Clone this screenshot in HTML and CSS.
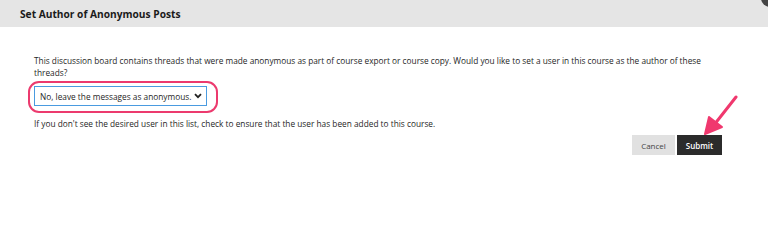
FILE: index.html
```html
<!DOCTYPE html>
<html lang="en">

<head>
    <meta charset="UTF-8">
    <meta name="viewport" content="width=device-width, initial-scale=1.0">
    <title>Set Author of Anonymous Posts</title>
    <link rel="stylesheet" href="styles.css">
</head>

<body>
    <div class="dialog">
        <div class="dialog-header">
            <h1>Set Author of Anonymous Posts</h1>
            <span class="close-button"></span>
        </div>
        <div class="dialog-body">
            <p class="intro">This discussion board contains threads that were made anonymous as part of course export or course copy. Would you like to set a user in this course as the author of these threads?</p>
            <div class="highlight">
                <div class="select-box">
                    <span>No, leave the messages as anonymous.</span>
                    <svg class="chevron" width="8" height="6" viewBox="0 0 8 6">
                        <path d="M1 1.2 L4 4.2 L7 1.2" fill="none" stroke="#222" stroke-width="1.8" />
                    </svg>
                </div>
            </div>
            <p class="hint">If you don't see the desired user in this list, check to ensure that the user has been added to this course.</p>
            <div class="actions">
                <button class="btn btn-cancel">Cancel</button>
                <button class="btn btn-submit">Submit</button>
            </div>
        </div>
        <!-- annotation arrow pointing at submit -->
        <svg class="pointer-arrow" width="40" height="44" viewBox="0 0 40 44">
            <path d="M36 2 L14 30" stroke="#f0386e" stroke-width="3" stroke-linecap="round" />
            <path d="M5 39 L9 22 L22 32 Z" fill="#f0386e" stroke="#f0386e" stroke-width="2" stroke-linejoin="round" />
        </svg>
    </div>
</body>

</html>
```

FILE: styles.css
```css
body {
    margin: 0;
    background-color: #ffffff;
    color: #262626;
    font-family: 'Open Sans', sans-serif;
    overflow: hidden;
}

.dialog {
    position: relative;
    height: 247px;
}

.dialog-header {
    position: relative;
    height: 27px;
    background-color: #e5e5e5;
    padding-left: 20px;
    display: flex;
    align-items: center;
}

.dialog-header h1 {
    margin: 0;
    font-size: 10.2px;
    font-weight: 700;
    color: #1a1a1a;
}

.close-button {
    position: absolute;
    top: -11px;
    right: -11px;
    width: 18px;
    height: 18px;
    border-radius: 50%;
    background-color: #444444;
}

.dialog-body {
    padding: 28px 46px 0 34px;
}

.intro {
    margin: 0;
    font-size: 8.3px;
    line-height: 12px;
}

.highlight {
    display: inline-block;
    margin: 2px 0 0 -6px;
    padding: 3px 9px 5px 4px;
    border: 2px solid #ec3a6e;
    border-radius: 11px;
}

.select-box {
    width: 162px;
    height: 18px;
    border: 1px solid #4a9be0;
    display: flex;
    align-items: center;
    justify-content: space-between;
    padding: 0 4px 0 5px;
    font-size: 8.3px;
    white-space: nowrap;
    color: #262626;
}

.hint {
    margin: 5px 0 0;
    font-size: 8.3px;
    line-height: 12px;
}

.actions {
    display: flex;
    justify-content: flex-end;
    gap: 2px;
    margin-top: 5px;
}

.btn {
    height: 20px;
    border: none;
    border-radius: 0;
    font-family: 'Open Sans', sans-serif;
    font-size: 8px;
    padding: 0;
}

.btn-cancel {
    width: 43px;
    background-color: #e1e1e1;
    color: #444444;
}

.btn-submit {
    width: 45px;
    background-color: #2b2b2b;
    color: #ffffff;
    font-weight: 600;
}

.pointer-arrow {
    position: absolute;
    left: 700px;
    top: 95px;
}
```
